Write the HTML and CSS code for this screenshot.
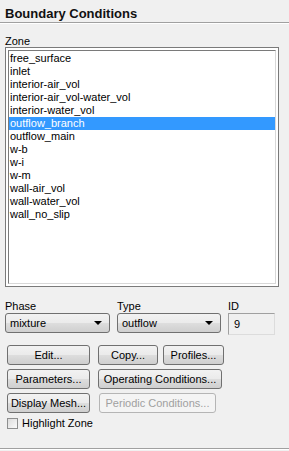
FILE: index.html
```html
<!DOCTYPE html>
<html lang="en">
<head>
  <meta charset="UTF-8" />
  <title>Boundary Conditions</title>
  <link rel="stylesheet" href="styles.css">
</head>
<body>
  <div class="panel">
    <h1 class="title">Boundary Conditions</h1>
    <div class="rule"></div>

    <div class="zone">
      <div class="label">Zone</div>
      <div class="listbox">
        <ul class="list">
          <li>free_surface</li>
          <li>inlet</li>
          <li>interior-air_vol</li>
          <li>interior-air_vol-water_vol</li>
          <li>interior-water_vol</li>
          <li class="selected">outflow_branch</li>
          <li>outflow_main</li>
          <li>w-b</li>
          <li>w-i</li>
          <li>w-m</li>
          <li>wall-air_vol</li>
          <li>wall-water_vol</li>
          <li>wall_no_slip</li>
        </ul>
      </div>
    </div>

    <div class="fields">
      <div class="field phase">
        <div class="label">Phase</div>
        <div class="combo"><span>mixture</span><i class="arrow"></i></div>
      </div>
      <div class="field type">
        <div class="label">Type</div>
        <div class="combo"><span>outflow</span><i class="arrow"></i></div>
      </div>
      <div class="field id">
        <div class="label">ID</div>
        <div class="idbox">9</div>
      </div>
    </div>

    <div class="buttons">
      <div class="btn-row">
        <button class="btn wide">Edit...</button>
        <button class="btn copy">Copy...</button>
        <button class="btn profiles">Profiles...</button>
      </div>
      <div class="btn-row">
        <button class="btn wide">Parameters...</button>
        <button class="btn operating">Operating Conditions...</button>
      </div>
      <div class="btn-row">
        <button class="btn wide">Display Mesh...</button>
        <button class="btn periodic" disabled>Periodic Conditions...</button>
      </div>
    </div>

    <label class="check"><span class="box"></span>Highlight Zone</label>
  </div>
  <div class="rule bottom"></div>
</body>
</html>
```

FILE: styles.css
```css
* { box-sizing: border-box; }

body {
  margin: 0;
  width: 289px;
  height: 451px;
  background: #f0f0f0;
  font-family: 'Liberation Sans', Arial, sans-serif;
  font-size: 11px;
  color: #000;
  overflow: hidden;
}

.panel {
  height: 448px;
}

.title {
  margin: 0;
  padding: 6px 0 0 5px;
  height: 22px;
  font-size: 13px;
  font-weight: bold;
  line-height: 15px;
  color: #111;
}

.rule {
  height: 2px;
  border-top: 1px solid #a0a0a0;
  border-bottom: 1px solid #fff;
}

/* Zone list */
.zone {
  padding: 11px 10px 0 5px;
}

.label {
  height: 13px;
  line-height: 13px;
  white-space: nowrap;
}

.zone .label {
  height: 12px;
}

.listbox {
  height: 240px;
  border: 1px solid #7a7a7a;
  padding: 2px;
  background: #fff;
}

.list {
  list-style: none;
  margin: 0;
  padding: 1px 0 0;
  height: 100%;
  border: 1px solid #7a7a7a;
  border-right-color: #d8d8d8;
  border-bottom-color: #d8d8d8;
}

.list li {
  height: 13px;
  line-height: 13px;
  padding-left: 1px;
  white-space: nowrap;
}

.list li.selected {
  background: #3399ff;
  color: #fff;
}

/* Phase / Type / ID */
.fields {
  display: flex;
  padding: 13px 0 0 5px;
}

.field .label {
  height: 12px;
  margin-bottom: 1px;
}

.phase { width: 112px; }
.type { width: 111px; }

.combo {
  display: flex;
  align-items: center;
  justify-content: space-between;
  height: 20px;
  padding: 0 7px 0 4px;
  border: 1px solid #707070;
  border-radius: 3px;
  background: linear-gradient(#f2f2f2 0%, #ebebeb 48%, #dddddd 52%, #cfcfcf 100%);
}

.phase .combo { width: 105px; }
.type .combo { width: 104px; }

.arrow {
  width: 0;
  height: 0;
  border-left: 4px solid transparent;
  border-right: 4px solid transparent;
  border-top: 4px solid #000;
}

.idbox {
  width: 47px;
  height: 22px;
  margin-top: 1px;
  padding: 4px 0 0 5px;
  border: 1px solid #a0a0a0;
  border-right-color: #dcdcdc;
  border-bottom-color: #dcdcdc;
  background: #f0f0f0;
}

/* Buttons */
.buttons {
  padding: 10px 0 0 7px;
  display: flex;
  flex-direction: column;
  gap: 4px;
}

.btn-row {
  display: flex;
  gap: 8px;
}

.btn {
  height: 20px;
  margin: 0;
  padding: 0;
  font-family: inherit;
  font-size: 11px;
  color: #000;
  white-space: nowrap;
  border: 1px solid #707070;
  border-radius: 3px;
  background: linear-gradient(#f2f2f2 0%, #ebebeb 48%, #dddddd 52%, #cfcfcf 100%);
}

.btn:disabled {
  color: #a0a0a0;
  border-color: #b5b5b5;
  background: #f4f4f4;
}

.wide { width: 83px; }
.copy { width: 60px; }
.profiles { width: 61px; margin-left: -3px; }
.operating { width: 124px; }
.periodic { width: 117px; margin-left: 1px; }

/* Checkbox */
.check {
  display: flex;
  align-items: center;
  gap: 4px;
  padding: 4px 0 0 7px;
  line-height: 13px;
  white-space: nowrap;
}

.box {
  width: 11px;
  height: 11px;
  border: 1px solid #8e8f8f;
  background: linear-gradient(135deg, #dcdcdc, #fafafa);
}
```
